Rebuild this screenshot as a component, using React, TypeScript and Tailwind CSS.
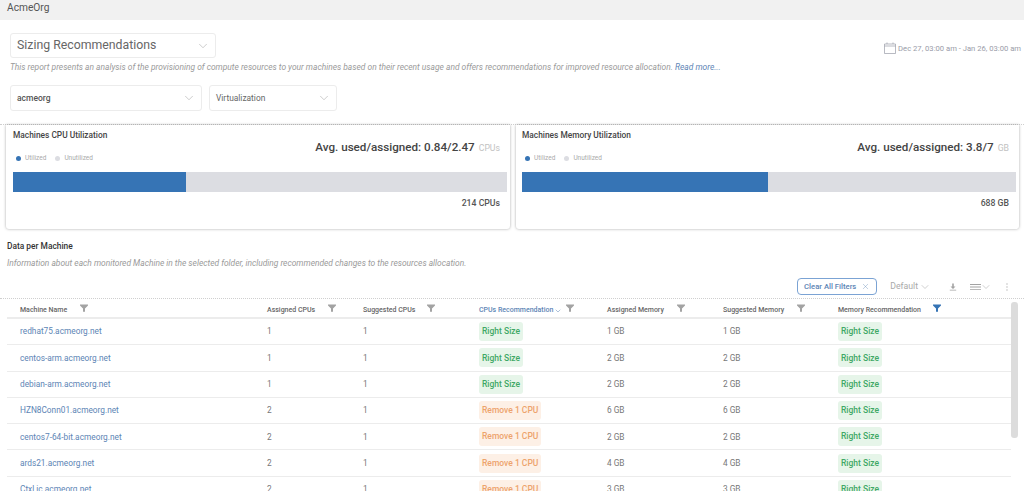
import { ChevronDown, X } from "lucide-react";

const ROWS = [
  ["redhat75.acmeorg.net", "1", "1", "Right Size", "1 GB", "1 GB"],
  ["centos-arm.acmeorg.net", "1", "1", "Right Size", "2 GB", "2 GB"],
  ["debian-arm.acmeorg.net", "1", "1", "Right Size", "2 GB", "2 GB"],
  ["HZN8Conn01.acmeorg.net", "2", "1", "Remove 1 CPU", "6 GB", "6 GB"],
  ["centos7-64-bit.acmeorg.net", "2", "1", "Remove 1 CPU", "2 GB", "2 GB"],
  ["ards21.acmeorg.net", "2", "1", "Remove 1 CPU", "4 GB", "4 GB"],
  ["Ctxl ic.acmeorg.net", "2", "1", "Remove 1 CPU", "3 GB", "3 GB"],
];

const HEADERS = [
  ["Machine Name", "ml-[13px]"],
  ["Assigned CPUs", "ml-[13px]"],
  ["Suggested CPUs", "ml-[12px]"],
  ["CPUs Recommendation", "ml-[4px]"],
  ["Assigned Memory", "ml-[13px]"],
  ["Suggested Memory", "ml-[13px]"],
  ["Memory Recommendation", "ml-[12px]"],
];

const COLS = "grid grid-cols-[260px_96px_116px_128px_116px_115px_173px]";

function Funnel({ active = false }: { active?: boolean }) {
  return (
    <svg viewBox="0 0 8 8" className="h-[8px] w-[8px]">
      <path d="M0 0.5h8v1L5 4.5v3.2H3V4.5L0 1.5z" fill={active ? "#3674b5" : "#a3a3a3"} />
    </svg>
  );
}

function Dropdown({ label, className }: { label: string; className: string }) {
  return (
    <div className={`flex items-center justify-between rounded-[3px] border border-[#ececec] pl-[6px] pr-[5px] ${className}`}>
      <span>{label}</span>
      <ChevronDown className="h-[14px] w-[14px] text-[#a8a8a8]" strokeWidth={1} />
    </div>
  );
}

function Badge({ text }: { text: string }) {
  const remove = text.startsWith("Remove");
  return (
    <span
      className={`flex h-[19px] items-center rounded-[3px] px-[3px] text-[8.5px] font-medium ${
        remove ? "bg-[#fdf0e6] text-[#eda36c]" : "bg-[#e6f5e9] text-[#3fa866]"
      }`}
    >
      {text}
    </span>
  );
}

function UsageCard({
  title,
  avg,
  unit,
  total,
  pct,
  className,
}: {
  title: string;
  avg: string;
  unit: string;
  total: string;
  pct: number;
  className: string;
}) {
  return (
    <section className={`h-[104px] rounded-b-[3px] bg-white pr-[3px] shadow-[0_0_3px_rgba(0,0,0,0.35)] ${className}`}>
      <div className="flex justify-between">
        <div>
          <h3 className="mt-[5px] text-[8.35px] font-medium leading-[11px] text-[#444]">{title}</h3>
          <div className="mt-[13px] flex items-center text-[6.5px] leading-[8px] text-[#aaa]">
            <span className="ml-[3px] h-[5px] w-[5px] rounded-full bg-[#3674b5]" />
            <span className="ml-[4px]">Utilized</span>
            <span className="ml-[9px] h-[5px] w-[5px] rounded-full bg-[#dcdde2]" />
            <span className="ml-[4px]">Unutilized</span>
          </div>
        </div>
        <div className="mr-[7px] mt-[14px] flex items-baseline gap-[4px] leading-[16px]">
          <span className="text-[11.65px] font-medium text-[#444]">{avg}</span>
          <span className="text-[8.7px] text-[#c2c2c2]">{unit}</span>
        </div>
      </div>
      <div className="mt-[10px] flex h-[20px] bg-[#dcdde2]">
        <div className="bg-[#3674b5]" style={{ width: `${pct}%` }} />
      </div>
      <div className="mr-[7px] mt-[5px] text-right text-[8.7px] font-medium leading-[12px] text-[#555]">{total}</div>
    </section>
  );
}

export default function App() {
  return (
    <div className="h-[491px] overflow-hidden bg-white font-['Roboto',sans-serif] text-[#555]">
      <header className="flex h-[20px] items-center bg-[#f1f1f1] pb-[5px] pl-[7px] text-[10.2px] text-[#555]">AcmeOrg</header>

      <div className="flex items-start justify-between pl-[10px] pr-[3px] pt-[13px]">
        <Dropdown label="Sizing Recommendations" className="h-[25px] w-[206px] text-[12.3px] text-[#666]" />
        <div className="mt-[8px] flex items-center gap-[2px] text-[7.65px] text-[#9a9ca8]">
          <svg viewBox="0 0 12 12" className="h-[12px] w-[12px]" fill="none" stroke="#9a9ca8" strokeWidth="0.7">
            <path d="M0.5 2h11v9.5h-11zM0.5 4h11M3 0.5V2M9 0.5V2" />
          </svg>
          <span className="mt-[2px]">Dec 27, 03:00 am - Jan 26, 03:00 am</span>
        </div>
      </div>

      <p className="ml-[10px] mt-[4px] text-[8.42px] italic leading-[10px] text-[#9a9a9a]">
        This report presents an analysis of the provisioning of compute resources to your machines based on their recent usage and offers recommendations for improved resource allocation.{" "}
        <span className="text-[#5d85b5]">Read more...</span>
      </p>

      <div className="ml-[10px] mt-[13px] flex gap-[7px]">
        <Dropdown label="acmeorg" className="h-[26px] w-[192px] text-[8.5px] font-medium text-[#555]" />
        <Dropdown label="Virtualization" className="h-[26px] w-[128px] text-[8.4px] text-[#666]" />
      </div>

      <div className="mt-[13px] border-t border-dotted border-[#cfcfcf]">
        <div className="flex gap-[6px] pl-[6px]">
          <UsageCard title="Machines CPU Utilization" avg="Avg. used/assigned: 0.84/2.47" unit="CPUs" total="214 CPUs" pct={35} className="w-[504px] pl-[7px]" />
          <UsageCard title="Machines Memory Utilization" avg="Avg. used/assigned: 3.8/7" unit="GB" total="688 GB" pct={49.8} className="w-[503px] pl-[6px]" />
        </div>
      </div>

      <h2 className="ml-[7px] mt-[12px] text-[8.4px] font-medium leading-[11px] text-[#333]">Data per Machine</h2>
      <p className="ml-[7px] mt-[6px] text-[8.42px] italic leading-[10px] text-[#9a9a9a]">
        Information about each monitored Machine in the selected folder, including recommended changes to the resources allocation.
      </p>

      <div className="mt-[10px] flex h-[20px] items-start justify-end pr-[16px]">
        <div className="flex h-[17px] w-[80px] items-center justify-center gap-[5px] rounded-[4px] border border-[#7ba3d4] text-[7.7px] font-medium text-[#5d85b5]">
          Clear All Filters
          <X className="h-[9px] w-[9px]" strokeWidth={1} />
        </div>
        <div className="flex h-[17px] items-center">
          <span className="ml-[13px] text-[8.7px] text-[#a9a9a9]">Default</span>
          <ChevronDown className="ml-[1px] h-[12px] w-[12px] text-[#a9a9a9]" strokeWidth={1.1} />
          <svg viewBox="0 0 8 8" className="ml-[18px] h-[8px] w-[8px]" fill="#a3a3a3">
            <path d="M3.2 0.5h1.6v3H6.5L4 6 1.5 3.5h1.7zM0.8 6.7h6.4v0.8H0.8z" />
          </svg>
          <svg viewBox="0 0 11 8" className="ml-[13px] h-[8px] w-[11px]" fill="#a3a3a3">
            <path d="M0 1h11v0.9H0zM0 3.6h11v0.9H0zM0 6.2h11v0.9H0z" />
          </svg>
          <ChevronDown className="-ml-[1px] h-[12px] w-[12px] text-[#a9a9a9]" strokeWidth={1.1} />
          <svg viewBox="0 0 2 8" className="ml-[14px] h-[8px] w-[2px]" fill="#a3a3a3">
            <path d="M0.4 0.4h1.2v1.2H0.4zM0.4 3.4h1.2v1.2H0.4zM0.4 6.4h1.2v1.2H0.4z" />
          </svg>
        </div>
      </div>

      <div className="relative border-t border-dotted border-[#cfcfcf]">
        <div className="ml-[7px] w-[1004px]">
          <div className={`${COLS} h-[20px] items-center border-b-[2px] border-[#ececec] pt-[5px] text-[7px] font-medium text-[#666]`}>
            {HEADERS.map(([label, gap], i) => (
              <div key={label} className={`flex items-center ${i === 0 ? "ml-[13px]" : ""} ${i === 3 ? "text-[#5d85b5]" : ""}`}>
                <span>{label}</span>
                {i === 3 && <ChevronDown className="ml-[1px] h-[8px] w-[8px]" strokeWidth={1.5} />}
                <span className={`${gap} -mt-[6px]`}>
                  <Funnel active={i === 6} />
                </span>
              </div>
            ))}
          </div>
          {ROWS.map((r) => (
            <div key={r[0]} className={`${COLS} h-[26.3px] items-center border-b border-[#ececec] text-[8.3px] text-[#777]`}>
              <span className="ml-[13px] text-[#5d85b5]">{r[0]}</span>
              <span>{r[1]}</span>
              <span>{r[2]}</span>
              <div className="flex">
                <Badge text={r[3]} />
              </div>
              <span>{r[4]}</span>
              <span>{r[5]}</span>
              <div className="flex">
                <Badge text="Right Size" />
              </div>
            </div>
          ))}
        </div>
        <div className="absolute left-[1011px] top-[3px] h-[136px] w-[7px] rounded-[3px] bg-[#dcdcdc]" />
      </div>
    </div>
  );
}
